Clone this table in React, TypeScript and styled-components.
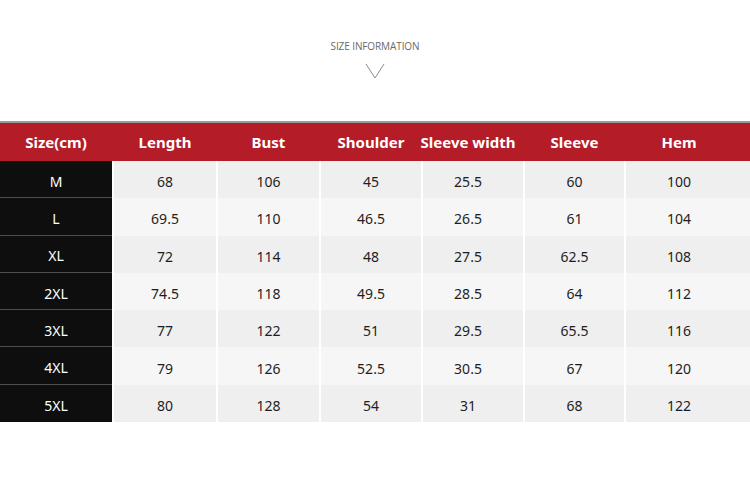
import React from 'react';
import styled, { createGlobalStyle } from 'styled-components';

const columns = ['Size(cm)', 'Length', 'Bust', 'Shoulder', 'Sleeve width', 'Sleeve', 'Hem'];

// right padding per column, nudges text off centre like the original artwork
const offsets = [0, 0, 0, 0, 10, 0, 18];

const rows = [
  ['M', '68', '106', '45', '25.5', '60', '100'],
  ['L', '69.5', '110', '46.5', '26.5', '61', '104'],
  ['XL', '72', '114', '48', '27.5', '62.5', '108'],
  ['2XL', '74.5', '118', '49.5', '28.5', '64', '112'],
  ['3XL', '77', '122', '51', '29.5', '65.5', '116'],
  ['4XL', '79', '126', '52.5', '30.5', '67', '120'],
  ['5XL', '80', '128', '54', '31', '68', '122'],
];

const GlobalStyle = createGlobalStyle`
  html, body {
    margin: 0;
    padding: 0;
    background: #ffffff;
  }
  body {
    font-family: 'Open Sans', 'Noto Sans', Arial, sans-serif;
  }
`;

const App = () => {
  return (
    <Page>
      <GlobalStyle />
      <Title>SIZE INFORMATION</Title>
      <Chevron width="20" height="16" viewBox="0 0 20 16">
        <polyline points="1,1 10,15 19,1" fill="none" stroke="#8a8a8a" strokeWidth="1" />
      </Chevron>
      <Table>
        <HeaderRow>
          {columns.map((c, i) => (
            <HeadCell key={c} offset={offsets[i]}>
              {c}
            </HeadCell>
          ))}
        </HeaderRow>
        {rows.map((r, i) => (
          <Row key={r[0]}>
            <SizeCell last={i === rows.length - 1}>{r[0]}</SizeCell>
            {r.slice(1).map((v, j) => (
              <DataCell key={j} alt={i % 2 === 1} offset={offsets[j + 1]}>
                {v}
              </DataCell>
            ))}
          </Row>
        ))}
      </Table>
    </Page>
  );
};

const Page = styled.div`
  width: 750px;
  height: 501px;
  display: flex;
  flex-direction: column;
  align-items: center;
  padding-top: 40px;
  box-sizing: border-box;
  overflow: hidden;
`;

const Title = styled.div`
  font-family: 'Open Sans', 'Noto Sans', sans-serif;
  font-size: 10px;
  line-height: 13px;
  color: #6a6a6a;
  letter-spacing: -0.1px;
`;

const Chevron = styled.svg`
  margin-top: 10px;
  display: block;
`;

const Table = styled.div`
  width: 100%;
  margin-top: 42px;
  border-top: 2px solid #9a9a9a;
`;

const grid = `
  display: grid;
  grid-template-columns: 112px 102px 101px 100px 100px 99px 1fr;
  column-gap: 2px;
`;

const HeaderRow = styled.div`
  ${grid};
  height: 38px;
  background: #b41c28;
`;

const HeadCell = styled.div<{ offset: number }>`
  display: flex;
  align-items: center;
  justify-content: center;
  color: #ffffff;
  font-family: 'Noto Sans', 'Open Sans', sans-serif;
  font-weight: 700;
  font-size: 15px;
  white-space: nowrap;
  padding-right: ${(p) => p.offset}px;
`;

const Row = styled.div`
  ${grid};
  height: 37.3px;
  background: #ffffff;
`;

const SizeCell = styled.div<{ last?: boolean }>`
  display: flex;
  align-items: center;
  justify-content: center;
  background: #0e0e0e;
  color: #ffffff;
  font-family: 'Noto Sans', 'Open Sans', sans-serif;
  font-size: 14px;
  box-sizing: border-box;
  padding-top: 4px;
  border-bottom: ${(p) => (p.last ? 'none' : '1px solid #4e4e4e')};
`;

const DataCell = styled.div<{ alt?: boolean; offset: number }>`
  display: flex;
  align-items: center;
  justify-content: center;
  background: ${(p) => (p.alt ? '#f6f6f6' : '#efefef')};
  color: #1e1e1e;
  font-family: 'Noto Sans', 'Open Sans', sans-serif;
  font-size: 14px;
  box-sizing: border-box;
  padding-top: 4px;
  padding-right: ${(p) => p.offset}px;
`;

export default App;
